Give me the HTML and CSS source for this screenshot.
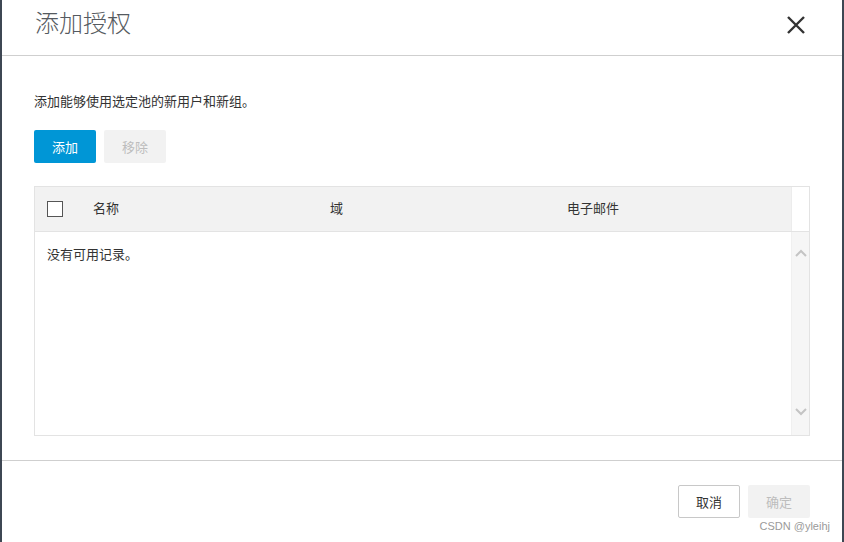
FILE: index.html
```html
<!DOCTYPE html>
<html lang="zh-CN">
<head>
<meta charset="utf-8">
<title>添加授权</title>
<link rel="stylesheet" href="styles.css">
</head>
<body>
<div class="dialog">
  <div class="header">
    <h1 class="title">添加授权</h1>
    <button class="close" aria-label="关闭">
      <svg width="20" height="20" viewBox="0 0 20 20"><path d="M2 2 L18 18 M18 2 L2 18" stroke="#333" stroke-width="2.4" fill="none" stroke-linecap="butt"/></svg>
    </button>
  </div>
  <div class="content">
    <p class="desc">添加能够使用选定池的新用户和新组。</p>
    <div class="actions">
      <button class="btn primary">添加</button>
      <button class="btn disabled">移除</button>
    </div>
    <div class="table">
      <div class="thead">
        <div class="cell check"><span class="checkbox"></span></div>
        <div class="cell">名称</div>
        <div class="cell">域</div>
        <div class="cell">电子邮件</div>
        <div class="cell sb-head"></div>
      </div>
      <div class="tbody">
        <div class="empty">没有可用记录。</div>
        <div class="scrollbar">
          <svg width="12" height="8" viewBox="0 0 12 8"><path d="M1 7 L6 2 L11 7" stroke="#c4c4c4" stroke-width="2" fill="none"/></svg>
          <svg width="12" height="8" viewBox="0 0 12 8"><path d="M1 1 L6 6 L11 1" stroke="#c4c4c4" stroke-width="2" fill="none"/></svg>
        </div>
      </div>
    </div>
  </div>
  <div class="footer">
    <button class="btn default">取消</button>
    <button class="btn disabled">确定</button>
  </div>
  <span class="watermark">CSDN @yleihj</span>
</div>
</body>
</html>
```

FILE: styles.css
```css
* { box-sizing: border-box; }
html, body { margin: 0; padding: 0; }
body {
  background: #3e4753;
  font-family: "Liberation Sans", "Noto Sans CJK SC", sans-serif;
  color: #333;
  font-size: 13px;
}
.dialog {
  position: relative;
  margin: 0 2px;
  height: 542px;
  background: #fff;
  display: flex;
  flex-direction: column;
}
.header {
  height: 56px;
  border-bottom: 1px solid #cfcfcf;
  display: flex;
  justify-content: space-between;
  align-items: flex-start;
  padding: 0 36px 0 33px;
}
.title {
  margin: 9px 0 0 0;
  font-size: 24px;
  line-height: 30px;
  font-weight: 300;
  color: #555a60;
}
.close {
  margin-top: 15px;
  padding: 0;
  border: 0;
  background: none;
  width: 20px;
  height: 20px;
  display: block;
}
.close svg { display: block; }
.content {
  padding: 0 32px 0 32px;
}
.desc {
  margin: 36px 0 0 0;
  line-height: 20px;
  font-size: 13px;
  color: #333;
}
.actions {
  display: flex;
  gap: 8px;
  margin-top: 18px;
}
.btn {
  width: 62px;
  height: 33px;
  border: 0;
  border-radius: 2px;
  font-family: inherit;
  font-size: 13px;
  padding: 0;
}
.primary { background: #0096d6; color: #fff; }
.disabled { background: #f2f2f2; color: #bdbdbd; }
.default { background: #fff; color: #333; border: 1px solid #c8c8c8; }
.table {
  margin-top: 23px;
  width: 776px;
  height: 250px;
  border: 1px solid #e3e3e3;
  display: flex;
  flex-direction: column;
}
.thead {
  display: grid;
  grid-template-columns: 45px 237px 237px 237px 1fr;
  height: 45px;
  border-bottom: 1px solid #e3e3e3;
}
.cell {
  background: #f2f2f2;
  display: flex;
  align-items: center;
  padding-left: 13px;
  line-height: 20px;
  color: #333;
}
.check { padding-left: 12px; }
.checkbox {
  width: 16px;
  height: 16px;
  border: 1px solid #555;
  background: #fff;
  display: block;
}
.sb-head {
  background: #fff;
  border-left: 1px solid #ececec;
  padding: 0;
}
.tbody {
  flex: 1;
  display: flex;
}
.empty {
  flex: 1;
  padding: 13px 12px;
  line-height: 20px;
  color: #333;
}
.scrollbar {
  width: 18px;
  background: #f6f6f6;
  border-left: 1px solid #f0f0f0;
  display: flex;
  flex-direction: column;
  justify-content: space-between;
  align-items: center;
  padding: 17px 0 19px 0;
}
.scrollbar svg { display: block; }
.footer {
  margin-top: 24px;
  border-top: 1px solid #cfcfcf;
  display: flex;
  justify-content: flex-end;
  gap: 8px;
  padding: 24px 32px 0 0;
}
.watermark {
  position: absolute;
  right: 12px;
  bottom: 9px;
  font-size: 11px;
  line-height: 13px;
  color: #9a9a9a;
}
```
